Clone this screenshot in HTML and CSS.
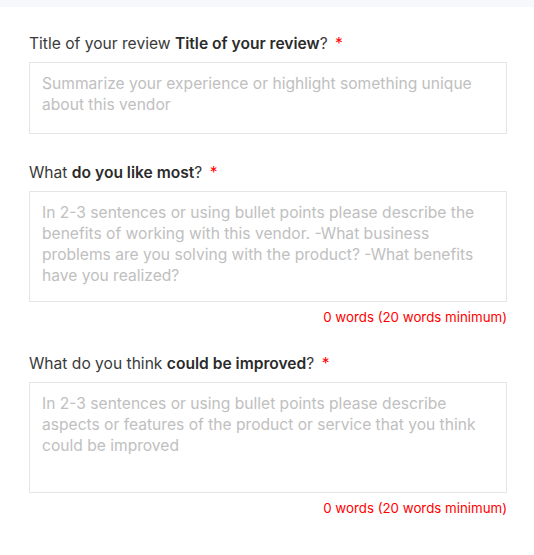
FILE: index.html
```html
<!DOCTYPE html>
<html>
<head>
<meta charset="utf-8">
<link rel="stylesheet" href="styles.css">
</head>
<body>
<div class="topbar"></div>
<form class="form">
  <div class="field">
    <label class="label">Title of your review <b>Title of your review</b>? <span class="req">*</span></label>
    <textarea class="input short" placeholder="Summarize your experience or highlight something unique about this vendor"></textarea>
  </div>
  <div class="field">
    <label class="label">What <b>do you like most</b>? <span class="req">*</span></label>
    <textarea class="input tall" placeholder="In 2-3 sentences or using bullet points please describe the benefits of working with this vendor. -What business problems are you solving with the product? -What benefits have you realized?"></textarea>
    <div class="count">0 words (20 words minimum)</div>
  </div>
  <div class="field">
    <label class="label">What do you think <b>could be improved</b>? <span class="req">*</span></label>
    <textarea class="input tall" placeholder="In 2-3 sentences or using bullet points please describe aspects or features of the product or service that you think could be improved"></textarea>
    <div class="count">0 words (20 words minimum)</div>
  </div>
</form>
</body>
</html>
```
FILE: styles.css
```css
html, body {
  margin: 0;
  padding: 0;
  background: #fff;
}
body {
  font-family: Inter, "Liberation Sans", sans-serif;
  color: #333;
}
.topbar {
  height: 7px;
  background: #f7f8fc;
}
.form {
  padding: 26px 27px 0 29px;
  display: flex;
  flex-direction: column;
}
.field {
  display: flex;
  flex-direction: column;
}
.label {
  font-size: 15.6px;
  line-height: 22px;
  color: #3a3a3a;
  margin-bottom: 7px;
}
.label b {
  font-weight: 600;
  color: #2b2b2b;
}
.req {
  color: #f00;
  margin-left: 3px;
}
.input {
  box-sizing: border-box;
  width: 100%;
  border: 1px solid #e6e6e6;
  border-radius: 0;
  padding: 10px 14px 10px 12px;
  font-family: inherit;
  font-size: 15.6px;
  line-height: 21px;
  resize: none;
  outline: none;
  display: block;
  margin: 0;
}
.input::placeholder {
  color: #c0c0c0;
}
.short {
  height: 72px;
  margin-bottom: 28px;
}
.tall {
  height: 111px;
}
.count {
  text-align: right;
  color: #f00;
  font-size: 13.3px;
  line-height: 18px;
  margin-top: 6px;
  margin-bottom: 27px;
}
```
